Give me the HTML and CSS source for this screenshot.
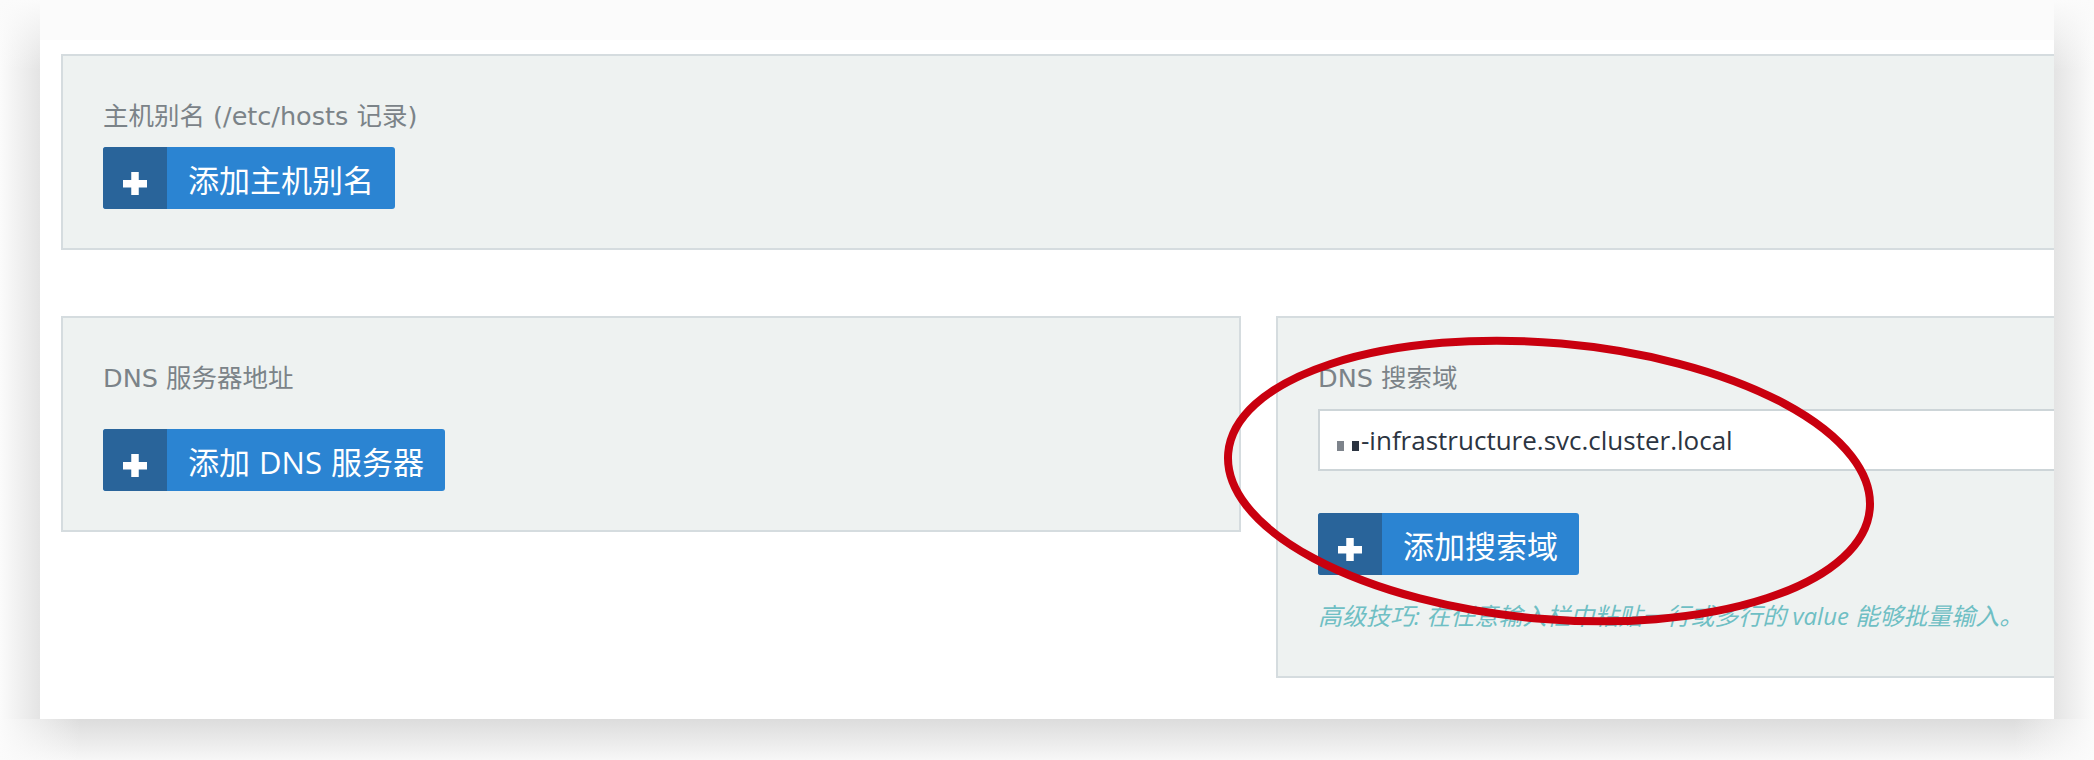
FILE: index.html
```html
<!DOCTYPE html>
<html lang="zh-CN">
<head>
  <meta charset="UTF-8">
  <title>DNS 设置</title>
  <link rel="stylesheet" href="styles.css">
</head>
<body>

<div class="shadow-left"></div>
<div class="shadow-right"></div>
<div class="shadow-bottom"></div>

<div class="card">
  <div class="panel panel-wide">
    <label class="field-label">主机别名 (/etc/hosts 记录)</label>
    <button type="button" class="btn-add">
      <span class="btn-icon"><svg width="24" height="23" viewBox="0 0 24 23"><path d="M0 8h24v7.5H0z M8.25 0h7.5v23h-7.5z" fill="#fff"/></svg></span>
      <span class="btn-text">添加主机别名</span>
    </button>
  </div>

  <div class="row">
    <div class="panel col">
      <label class="field-label">DNS 服务器地址</label>
      <button type="button" class="btn-add btn-spaced">
        <span class="btn-icon"><svg width="24" height="23" viewBox="0 0 24 23"><path d="M0 8h24v7.5H0z M8.25 0h7.5v23h-7.5z" fill="#fff"/></svg></span>
        <span class="btn-text">添加 DNS 服务器</span>
      </button>
    </div>

    <div class="panel col">
      <label class="field-label">DNS 搜索域</label>
      <div class="text-input">
        <span class="redact redact-light"></span><span class="redact redact-dark"></span>-infrastructure.svc.cluster.local
      </div>
      <button type="button" class="btn-add">
        <span class="btn-icon"><svg width="24" height="23" viewBox="0 0 24 23"><path d="M0 8h24v7.5H0z M8.25 0h7.5v23h-7.5z" fill="#fff"/></svg></span>
        <span class="btn-text">添加搜索域</span>
      </button>
      <p class="hint">高级技巧: 在任意输入栏中粘贴一行或多行的 value 能够批量输入。</p>
    </div>
  </div>
</div>

<!-- red annotation ring drawn on top of the screenshot -->
<svg class="annotation" width="680" height="320" viewBox="0 0 680 320">
  <ellipse cx="339" cy="161" rx="322" ry="138" transform="rotate(5 339 161)" fill="none" stroke="#c9000f" stroke-width="8"/>
</svg>

</body>
</html>
```

FILE: styles.css
```css
html {
  background-color: #fbfbfb;
}

body {
  margin: 40px 40px 0;
  font-family: "Open Sans", "Noto Sans CJK SC", sans-serif;
}

/* edge shading around the white sheet */
.shadow-left,
.shadow-right,
.shadow-bottom {
  position: absolute;
}

.shadow-left {
  left: 0;
  top: 0;
  width: 40px;
  height: 719px;
  background:
    linear-gradient(to bottom, #fbfbfb, rgba(251, 251, 251, 0) 70px),
    linear-gradient(to right, #fbfbfb, #e4e4e4);
}

.shadow-right {
  right: 0;
  top: 0;
  width: 40px;
  height: 719px;
  background:
    linear-gradient(to bottom, #fbfbfb, rgba(251, 251, 251, 0) 70px),
    linear-gradient(to left, #fbfbfb, #e4e4e4);
}

.shadow-bottom {
  left: 0;
  top: 719px;
  width: 2094px;
  height: 41px;
  background:
    linear-gradient(to right, #fbfbfb, rgba(251, 251, 251, 0) 80px, rgba(251, 251, 251, 0) calc(100% - 80px), #fbfbfb),
    linear-gradient(to bottom, #dcdcdc, #f7f7f7);
}

.card {
  position: relative;
  background-color: #fff;
  height: 679px;
  padding: 14px 0 0 21px;
  box-sizing: border-box;
  overflow: hidden;
}

.panel {
  background-color: #eef2f1;
  border: 2px solid #d5dcdf;
  padding: 45px 40px 39px;
  box-sizing: border-box;
}

.panel-wide {
  width: 2395px;
}

.row {
  display: flex;
  align-items: flex-start;
  gap: 35px;
  margin-top: 66px;
}

.col {
  width: 1180px;
  flex: none;
}

.field-label {
  display: block;
  font-family: "DejaVu Sans", "Noto Sans CJK SC", sans-serif;
  font-size: 25.5px;
  line-height: 30px;
  color: #7b8388;
  margin-bottom: 16px;
}

.btn-add {
  display: flex;
  height: 62px;
  padding: 0;
  border: none;
  border-radius: 3px;
  overflow: hidden;
  background-color: #2b84d2;
  color: #fff;
  font-family: inherit;
  cursor: pointer;
}

.btn-spaced {
  margin-top: 36px;
}

.btn-icon {
  width: 64px;
  background-color: #29649a;
  display: flex;
  align-items: center;
  justify-content: center;
  padding-top: 10px;
  box-sizing: border-box;
}

.btn-text {
  display: flex;
  align-items: center;
  padding: 0 21px;
  font-size: 31px;
  word-spacing: 1px;
}

.text-input {
  height: 62px;
  margin: 2px 0 42px;
  border: 2px solid #cdd5d8;
  background-color: #fff;
  padding-left: 17px;
  box-sizing: border-box;
  display: flex;
  align-items: center;
  font-size: 26px;
  color: #2c3441;
}

.redact {
  display: inline-block;
  width: 7px;
  height: 10px;
  margin-top: 12px;
}

.redact-light {
  background-color: #7d838b;
  margin-right: 8px;
}

.redact-dark {
  background-color: #2c3441;
  margin-right: 2px;
}

.hint {
  margin: 26px 0 6px;
  font-size: 24px;
  line-height: 30px;
  font-style: italic;
  color: #6fbfc4;
}

.annotation {
  position: absolute;
  left: 1210px;
  top: 320px;
}
```
